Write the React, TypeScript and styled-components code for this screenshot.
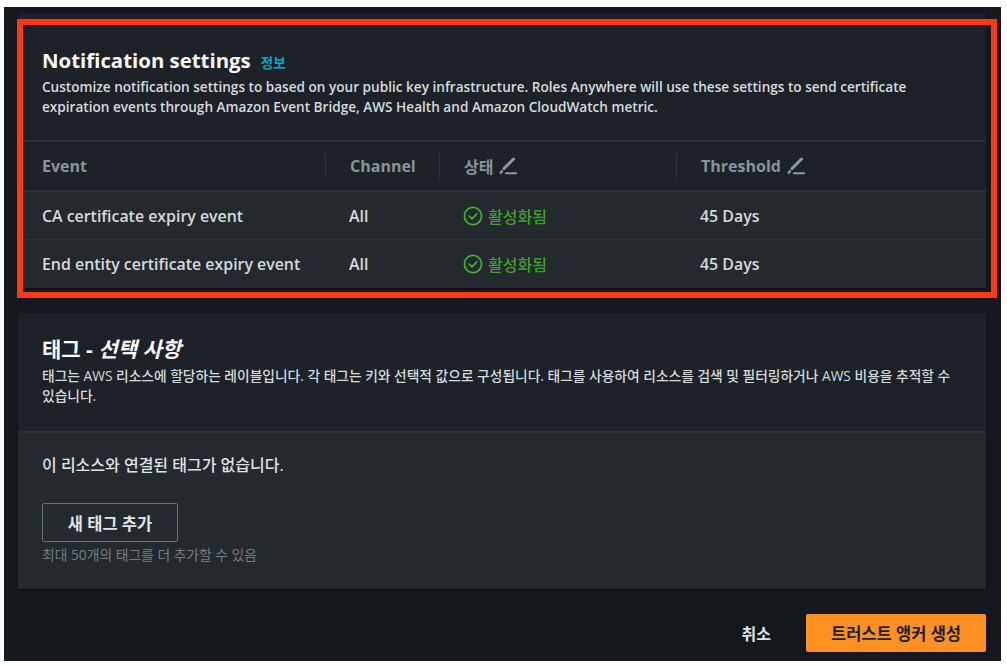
import React from "react";
import styled, { createGlobalStyle } from "styled-components";

const GlobalStyle = createGlobalStyle`
  html, body {
    margin: 0;
    padding: 0;
    background: #ffffff;
  }
  body {
    font-family: "Open Sans", "Noto Sans CJK KR", sans-serif;
    color: #d5dbdb;
  }
`;

const Page = styled.div`
  width: 1007px;
  height: 666px;
  padding: 7px 6px 5px 4px;
  box-sizing: border-box;
`;

const Canvas = styled.main`
  position: relative;
  height: 654px;
  padding: 6px 15px 0 14px;
  box-sizing: border-box;
  background: #15191e;
  display: flex;
  flex-direction: column;
`;

// the red marker drawn over the first card
const Highlight = styled.div`
  position: absolute;
  left: 13px;
  top: 12px;
  width: 980px;
  height: 279px;
  box-sizing: border-box;
  border: 6px solid #fb3a14;
  pointer-events: none;
`;

const Card = styled.section<{ $gap?: number }>`
  margin-top: ${({ $gap }) => $gap ?? 0}px;
  background: #1d2229;
  box-shadow: 0 1px 2px rgba(0, 0, 0, 0.5);
`;

const CardHeader = styled.header<{ $height: number; $top: number }>`
  height: ${({ $height }) => $height}px;
  padding: ${({ $top }) => $top}px 24px 0;
  box-sizing: border-box;
`;

const TitleRow = styled.div`
  display: flex;
  align-items: baseline;
  gap: 10px;
  height: 30px;
`;

const Title = styled.h2<{ $size: number }>`
  margin: 0;
  font-size: ${({ $size }) => $size}px;
  line-height: 30px;
  font-weight: 700;
  color: #fafafa;

  em {
    font-style: italic;
  }
`;

const InfoLink = styled.a`
  font-size: 13.5px;
  font-weight: 700;
  color: #00a8d0;
  text-decoration: none;
`;

const Description = styled.p<{ $size: number; $weight: number }>`
  margin: 2px 0 0;
  font-size: ${({ $size }) => $size}px;
  line-height: 20px;
  font-weight: ${({ $weight }) => $weight};
  color: #d5dbdb;
  white-space: nowrap;
`;

const Grid = styled.div`
  display: grid;
  grid-template-columns: 307px 114px 237px 310px;
`;

const HeadCell = styled.div`
  height: 52px;
  box-sizing: border-box;
  border-top: 2px solid #2b3038;
  border-bottom: 2px solid #2b3038;
  display: flex;
  align-items: center;
`;

const HeadLabel = styled.div<{ $first?: boolean }>`
  height: 26px;
  flex: 1;
  display: flex;
  align-items: center;
  gap: 6px;
  padding-left: 24px;
  border-left: ${({ $first }) => ($first ? "0" : "1px solid #2f353d")};
  font-size: 16px;
  font-weight: 700;
  color: #879596;
`;

const BodyCell = styled.div<{ $last?: boolean }>`
  height: 48px;
  box-sizing: border-box;
  padding-left: 24px;
  display: flex;
  align-items: center;
  gap: 5px;
  background: #24292d;
  border-bottom: ${({ $last }) => ($last ? "0" : "1px solid #2f353b")};
  font-size: 15.9px;
  font-weight: 600;
  color: #d5dbdb;
`;

const StatusText = styled.span`
  color: #37a42a;
  font-size: 16px;
  font-weight: 500;
`;

const CardBody = styled.div`
  height: 158px;
  box-sizing: border-box;
  padding: 21px 24px 0;
  background: #24292d;
  border-top: 2px solid #2e333b;
`;

const EmptyText = styled.p`
  margin: 0;
  font-size: 16px;
  line-height: 22px;
  font-weight: 500;
  color: #dfe3e3;
`;

const OutlineButton = styled.button`
  display: block;
  margin-top: 27px;
  width: 136px;
  height: 39px;
  background: transparent;
  border: 1px solid #687578;
  border-radius: 2px;
  font-family: inherit;
  font-size: 16.5px;
  font-weight: 700;
  color: #dfe3e3;
`;

const Hint = styled.p`
  margin: 3px 0 0;
  font-size: 13.8px;
  line-height: 20px;
  color: #6f8082;
`;

const Footer = styled.footer`
  margin-top: 25px;
  display: flex;
  justify-content: flex-end;
  align-items: center;
  gap: 35px;
`;

const TextButton = styled.button`
  background: none;
  border: 0;
  padding: 0;
  font-family: inherit;
  font-size: 16px;
  font-weight: 700;
  color: #dfe3e3;
`;

const PrimaryButton = styled.button`
  width: 180px;
  height: 38px;
  background: #ff9122;
  border: 0;
  border-radius: 2px;
  font-family: inherit;
  font-size: 16.5px;
  font-weight: 700;
  color: #1b1f24;
`;

const PencilIcon = () => (
  <svg width="18" height="18" viewBox="0 0 18 18" fill="none" stroke="#8d9b9d">
    <path d="M1.5 16l1.6-2" strokeWidth="2.2" strokeLinecap="round" />
    <path d="M5 11.5L14.5 2" strokeWidth="3" strokeLinecap="round" />
    <path d="M7 16.2h10" strokeWidth="2" strokeLinecap="round" />
  </svg>
);

const CheckCircleIcon = () => (
  <svg width="20" height="20" viewBox="0 0 20 20" fill="none" stroke="#3fb02c" strokeWidth="1.8">
    <circle cx="10" cy="10" r="8.6" />
    <path d="M6.2 10.2l2.7 2.6 4.8-5" strokeLinecap="round" strokeLinejoin="round" />
  </svg>
);

const rows = ["CA certificate expiry event", "End entity certificate expiry event"];

export default function App() {
  return (
    <Page>
      <GlobalStyle />
      <Canvas>
        <Card>
          <CardHeader $height={127} $top={32}>
            <TitleRow>
              <Title $size={20.4}>Notification settings</Title>
              <InfoLink href="#">정보</InfoLink>
            </TitleRow>
            <Description $size={13.6} $weight={600}>
              Customize notification settings to based on your public key infrastructure. Roles Anywhere will use these settings to send certificate
              <br />
              expiration events through Amazon Event Bridge, AWS Health and Amazon CloudWatch metric.
            </Description>
          </CardHeader>
          <Grid>
            <HeadCell>
              <HeadLabel $first>Event</HeadLabel>
            </HeadCell>
            <HeadCell>
              <HeadLabel>Channel</HeadLabel>
            </HeadCell>
            <HeadCell>
              <HeadLabel>
                상태 <PencilIcon />
              </HeadLabel>
            </HeadCell>
            <HeadCell>
              <HeadLabel>
                Threshold <PencilIcon />
              </HeadLabel>
            </HeadCell>
            {rows.map((name, i) => {
              const last = i === rows.length - 1;
              return (
                <React.Fragment key={name}>
                  <BodyCell $last={last}>{name}</BodyCell>
                  <BodyCell $last={last}>All</BodyCell>
                  <BodyCell $last={last}>
                    <CheckCircleIcon />
                    <StatusText>활성화됨</StatusText>
                  </BodyCell>
                  <BodyCell $last={last}>45 Days</BodyCell>
                </React.Fragment>
              );
            })}
          </Grid>
        </Card>

        <Card $gap={25}>
          <CardHeader $height={118} $top={21}>
            <Title $size={21}>
              태그 - <em>선택 사항</em>
            </Title>
            <Description $size={13.75} $weight={500}>
              태그는 AWS 리소스에 할당하는 레이블입니다. 각 태그는 키와 선택적 값으로 구성됩니다. 태그를 사용하여 리소스를 검색 및 필터링하거나 AWS 비용을 추적할 수
              <br />
              있습니다.
            </Description>
          </CardHeader>
          <CardBody>
            <EmptyText>이 리소스와 연결된 태그가 없습니다.</EmptyText>
            <OutlineButton>새 태그 추가</OutlineButton>
            <Hint>최대 50개의 태그를 더 추가할 수 있음</Hint>
          </CardBody>
        </Card>

        <Footer>
          <TextButton>취소</TextButton>
          <PrimaryButton>트러스트 앵커 생성</PrimaryButton>
        </Footer>
        <Highlight />
      </Canvas>
    </Page>
  );
}
